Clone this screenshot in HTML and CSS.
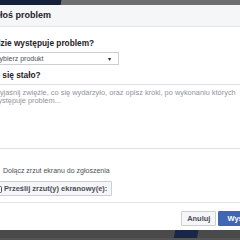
FILE: index.html
```html
<html>
<head>
<link rel="stylesheet" href="styles.css">
</head>
<body>

<div class="bgtop"></div>

<!-- report dialog -->
<div class="dlg">
    <div class="hdr">Zgłoś problem</div>

    <div class="body">
        <div class="lbl">Gdzie występuje problem?</div>
        <div class="sel">
            <span>Wybierz produkt</span>
            <span class="arr">&#9662;</span>
        </div>

        <div class="lbl">Co się stało?</div>
        <div class="area">Wyjaśnij zwięźle, co się wydarzyło, oraz opisz kroki, po wykonaniu których występuje problem...</div>

        <div class="chk">
            <span class="box"></span>
            <label>Dołącz zrzut ekranu do zgłoszenia</label>
        </div>

        <button class="btn upl">
            <svg width="9" height="8" viewBox="0 0 9 8"><rect x="0.5" y="1.5" width="8" height="6" rx="1" fill="none" stroke="#4b4f56"/><circle cx="4.5" cy="4.5" r="1.6" fill="none" stroke="#4b4f56"/></svg>
            Prześlij zrzut(y) ekranowy(e):
        </button>
    </div>

    <div class="ftr">
        <button class="btn">Anuluj</button>
        <button class="btn blue">Wyślij</button>
    </div>
</div>

<div class="bgbot"></div>

</body>
</html>
```

FILE: styles.css
```css
html, body {
    margin: 0;
    padding: 0;
    width: 240px;
    height: 240px;
    overflow: hidden;
    background: #555;
    font-family: 'Liberation Sans', Arial, sans-serif;
    color: #1d2129;
}
.bgtop {
    height: 5px;
    background: linear-gradient(100deg, #15203a 60px, #6e6e6e 61px);
}
.bgbot {
    height: 8px;
    background: linear-gradient(100deg, #4a4a4a 172px, #1a2744 173px, #1a2744 195px, #4a4a4a 196px);
}
.dlg {
    background: #fff;
    margin-left: -23px;
    width: 290px;
}
.hdr {
    background: #f5f6f7;
    border-bottom: 1px solid #e5e5e5;
    height: 21px;
    line-height: 21px;
    padding-left: 12px;
    font-size: 9px;
    font-weight: bold;
}
.body {
    padding: 9px 12px 6px 12px;
}
.lbl {
    font-size: 8.3px;
    font-weight: bold;
    margin: 2px 0 4px 0;
}
.sel {
    display: flex;
    justify-content: space-between;
    align-items: center;
    width: 118px;
    height: 11px;
    border: 1px solid #ccd0d5;
    padding: 0 7px 0 3px;
    font-size: 7px;
    color: #4b4f56;
    margin-bottom: 5px;
}
.arr {
    font-size: 6px;
    color: #1d2129;
}
.area {
    border: 1px solid #dddfe2;
    height: 55px;
    padding: 4px 3px;
    font-size: 7.4px;
    line-height: 8px;
    color: #90949c;
    margin-top: 4px;
    margin-bottom: 17px;
}
.chk {
    display: flex;
    align-items: center;
    gap: 5px;
    font-size: 7px;
    color: #4b4f56;
    margin-bottom: 6px;
}
.box {
    width: 7px;
    height: 7px;
    border: 1px solid #bec3c9;
    border-radius: 1px;
    background: #fff;
}
.btn {
    font-family: 'Liberation Sans', Arial, sans-serif;
    font-size: 7.5px;
    font-weight: bold;
    color: #4b4f56;
    background: #f5f6f7;
    border: 1px solid #ccd0d5;
    border-radius: 1px;
    height: 15px;
    padding: 0 5px;
}
.upl {
    display: flex;
    align-items: center;
    gap: 2px;
    padding: 0 4px 0 3px;
}
.ftr {
    border-top: 1px solid #e5e5e5;
    height: 28px;
    display: flex;
    justify-content: flex-end;
    align-items: center;
    gap: 2px;
    padding: 3px 9px 0 0;
    box-sizing: border-box;
}
.blue {
    background: #4267b2;
    border-color: #4267b2;
    color: #fff;
    padding: 0 8px;
}
```
